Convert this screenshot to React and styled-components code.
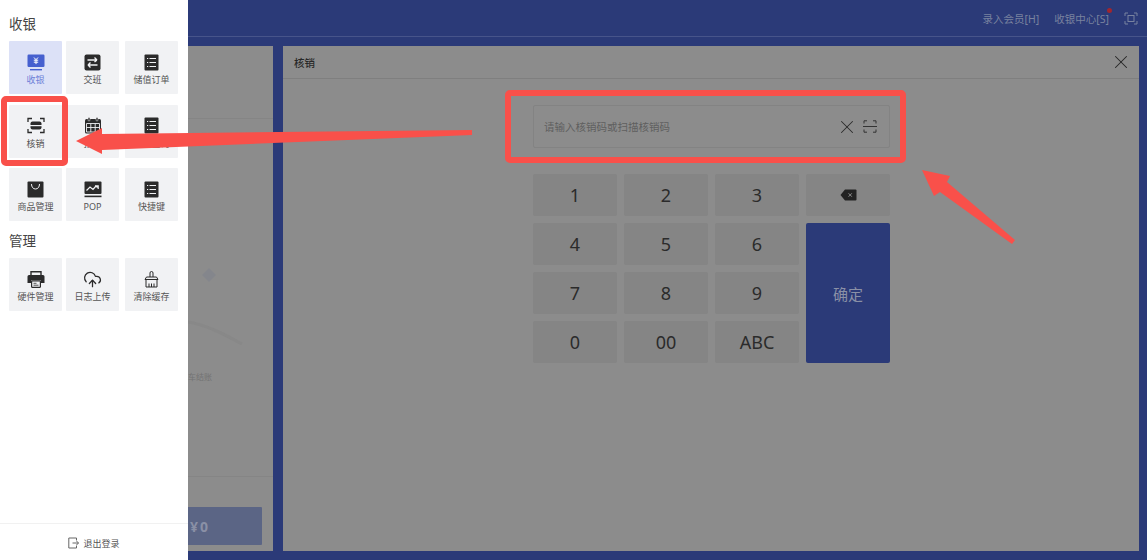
import React from 'react';
import styled, { createGlobalStyle } from 'styled-components';
import { X, CloudUpload } from 'lucide-react';

const GlobalStyle = createGlobalStyle`
  html, body {
    margin: 0;
    padding: 0;
    height: 100%;
    overflow: hidden;
    font-family: "Noto Sans", "Noto Sans CJK SC", sans-serif;
  }
  #root {
    height: 100%;
  }
  * {
    box-sizing: border-box;
  }
`;

const ListIcon = () => (
  <svg width="17" height="17" viewBox="0 0 17 17">
    <rect x="1.5" y="0.5" width="14" height="16" rx="1" fill="#2b2b2b" />
    <path d="M4 4.5h1.2M6.5 4.5h6.5M4 8.5h1.2M6.5 8.5h6.5M4 12.5h1.2M6.5 12.5h6.5" stroke="#f1f2f4" strokeWidth="1.2" />
  </svg>
);

const CashIcon = () => (
  <svg width="18" height="17" viewBox="0 0 18 17">
    <rect x="0.5" y="0.5" width="17" height="12.5" rx="1.2" fill="#4660cf" />
    <rect x="3" y="15" width="12" height="1.4" fill="#4660cf" />
    <path d="M7 3.5l2 2.2 2-2.2M6.8 6.2h4.4M6.8 8.2h4.4M9 5.7v4.4" stroke="#fff" strokeWidth="1" fill="none" />
  </svg>
);

const SwapIcon = () => (
  <svg width="17" height="17" viewBox="0 0 17 17">
    <rect x="0.5" y="0.5" width="16" height="16" rx="2" fill="#2b2b2b" />
    <path d="M3.5 6h9.5M10.5 3.5L13 6M13.5 11H4M6.5 8.5L4 11M4 11l2.5 2.5M13 6l-2.5 2" stroke="#f1f2f4" strokeWidth="1.4" fill="none" />
  </svg>
);

const VerifyIcon = () => (
  <svg width="18" height="17" viewBox="0 0 18 17">
    <path d="M1 5V1.5h4M13 1.5h4V5M1 12v3.5h4M13 15.5h4V12" stroke="#2b2b2b" strokeWidth="1.3" fill="none" />
    <rect x="3.5" y="4.5" width="11" height="8" rx="2" fill="#2b2b2b" />
    <rect x="1" y="8" width="16" height="1.2" fill="#f1f2f4" />
  </svg>
);

const CalendarIcon = () => (
  <svg width="18" height="17" viewBox="0 0 18 17">
    <rect x="1" y="2" width="16" height="14.5" rx="1.5" fill="#2b2b2b" />
    <rect x="4" y="0.5" width="2" height="3.5" rx="1" fill="#2b2b2b" stroke="#f1f2f4" strokeWidth="0.5" />
    <rect x="12" y="0.5" width="2" height="3.5" rx="1" fill="#2b2b2b" stroke="#f1f2f4" strokeWidth="0.5" />
    <path d="M2.5 6.5h13v8.5h-13zM2.5 10.5h13M6.8 6.5v8.5M11.2 6.5v8.5" stroke="#f1f2f4" strokeWidth="0.9" fill="none" />
  </svg>
);

const BagIcon = () => (
  <svg width="17" height="17" viewBox="0 0 17 17">
    <rect x="0.5" y="0.5" width="16" height="16" rx="1" fill="#2b2b2b" />
    <path d="M4.5 3c0 3 1.6 5 4 5s4-2 4-5" stroke="#f1f2f4" strokeWidth="1" fill="none" />
  </svg>
);

const ChartIcon = () => (
  <svg width="18" height="17" viewBox="0 0 18 17">
    <rect x="0.5" y="0.5" width="17" height="12.5" rx="1" fill="#2b2b2b" />
    <rect x="0.5" y="14.6" width="17" height="1.6" fill="#2b2b2b" />
    <path d="M2.5 9.5l3.5-3.5 3 2.5 3-3.5 1.5 1.5M11 4.8h3.2V8" stroke="#f1f2f4" strokeWidth="1.2" fill="none" />
  </svg>
);

const PrinterIcon = () => (
  <svg width="18" height="17" viewBox="0 0 18 17">
    <path d="M4 4V0.8h10V4" stroke="#2b2b2b" strokeWidth="1.4" fill="none" />
    <path d="M2 4h14a1.5 1.5 0 011.5 1.5V12H14V9.5H4V12H.5V5.5A1.5 1.5 0 012 4z" fill="#2b2b2b" />
    <rect x="4.6" y="10" width="8.8" height="6.3" rx="0.5" fill="#f1f2f4" stroke="#2b2b2b" strokeWidth="1.2" />
    <path d="M6.5 12.3h3M6.5 14.2h5" stroke="#2b2b2b" strokeWidth="0.8" />
  </svg>
);

const BrushIcon = () => (
  <svg width="17" height="17" viewBox="0 0 17 17">
    <path d="M7 6V2a1.5 1.5 0 013 0v4M3.5 6h10l1.5 2.5H2zM3 8.5v7.5h11V8.5M6 12.5V16M8.5 12.5V16M11 12.5V16" stroke="#2b2b2b" strokeWidth="1" fill="none" />
  </svg>
);

const FrameIcon = () => (
  <svg width="14" height="13" viewBox="0 0 14 13">
    <path d="M1 4V1h3M10 1h3v3M1 9v3h3M10 12h3V9" stroke="#79829f" strokeWidth="1" fill="none" />
    <rect x="4" y="3.5" width="6" height="6" stroke="#79829f" strokeWidth="1" fill="none" />
  </svg>
);

const ScanIcon = () => (
  <svg width="14" height="13" viewBox="0 0 14 13">
    <path d="M1 3.5V.8h3M10 .8h3v2.7M1 9.5v2.7h3M10 12.2h3V9.5M0 6.5h14" stroke="#333" strokeWidth="1" fill="none" />
  </svg>
);

const BackspaceIcon = () => (
  <svg width="17" height="12" viewBox="0 0 17 12">
    <path d="M5 0.5h10.5a1 1 0 011 1v9a1 1 0 01-1 1H5L0.5 6z" fill="#222" />
    <path d="M8.6 4.3l3.2 3.4M11.8 4.3l-3.2 3.4" stroke="#8a8a8a" strokeWidth="1" />
  </svg>
);

const ExitIcon = () => (
  <svg width="11" height="12" viewBox="0 0 11 12">
    <path d="M8.5 3.5V1H.8v10h7.7V8.5" stroke="#666" strokeWidth="1" fill="none" />
    <path d="M4.5 6h6M8.5 4l2 2-2 2" stroke="#666" strokeWidth="1" fill="none" />
  </svg>
);

const cashTiles = [
  { label: '收银', icon: <CashIcon />, active: true },
  { label: '交班', icon: <SwapIcon /> },
  { label: '储值订单', icon: <ListIcon /> },
  { label: '核销', icon: <VerifyIcon /> },
  { label: '预约', icon: <CalendarIcon /> },
  { label: '订单查询', icon: <ListIcon /> },
  { label: '商品管理', icon: <BagIcon /> },
  { label: 'POP', icon: <ChartIcon /> },
  { label: '快捷键', icon: <ListIcon /> },
];

const manageTiles = [
  { label: '硬件管理', icon: <PrinterIcon /> },
  { label: '日志上传', icon: <CloudUpload size={19} color="#2b2b2b" strokeWidth={1.6} /> },
  { label: '清除缓存', icon: <BrushIcon /> },
];

const keys = ['1', '2', '3', 'del', '4', '5', '6', 'ok', '7', '8', '9', '0', '00', 'ABC'];

function Tiles({ items }) {
  return (
    <TileGrid>
      {items.map(item => (
        <Tile key={item.label} $active={item.active}>
          <TileIcon>{item.icon}</TileIcon>
          <TileLabel $active={item.active}>{item.label}</TileLabel>
        </Tile>
      ))}
    </TileGrid>
  );
}

export default function App() {
  return (
    <Page>
      <GlobalStyle />
      <Drawer>
        <DrawerBody>
          <SectionTitle>收银</SectionTitle>
          <Tiles items={cashTiles} />
          <SectionTitle>管理</SectionTitle>
          <Tiles items={manageTiles} />
        </DrawerBody>
        <Logout>
          <ExitIcon />
          退出登录
        </Logout>
      </Drawer>

      <Main>
        <TopBar>
          <TopLink>录入会员[H]</TopLink>
          <TopLink $dot>收银中心[S]</TopLink>
          <FrameIcon />
        </TopBar>
        <Content>
          <CartPanel>
            <CartHead />
            <CartBody>
              <Ghost viewBox="0 0 85 110" width="85" height="110">
                <path d="M14 19l7-7 7 7-7 7z" fill="#84868c" />
                <path d="M0 66c18 3 34 11 54 22" stroke="#888888" strokeWidth="3" fill="none" />
              </Ghost>
              <CartHint>车结账</CartHint>
            </CartBody>
            <CartFoot>
              <PayButton>¥0</PayButton>
            </CartFoot>
          </CartPanel>

          <Dialog>
            <DialogHead>
              <DialogTitle>核销</DialogTitle>
              <X size={22} color="#262626" strokeWidth={1.1} />
            </DialogHead>
            <DialogBody>
              <CodeInput>
                <Placeholder>请输入核销码或扫描核销码</Placeholder>
                <X size={22} color="#2b2b2b" strokeWidth={1.1} />
                <ScanIcon />
              </CodeInput>
              <Keypad>
                {keys.map(key => {
                  if (key === 'ok') return <ConfirmKey key={key}>确定</ConfirmKey>;
                  return <Key key={key}>{key === 'del' ? <BackspaceIcon /> : key}</Key>;
                })}
              </Keypad>
            </DialogBody>
          </Dialog>
        </Content>
      </Main>

      {/* annotations drawn on top of the screenshot */}
      <MarkBox $x={1} $y={96} $w={67} $h={70} />
      <MarkBox $x={505} $y={90} $w={401} $h={73} />
      <Arrows viewBox="0 0 1147 560" width="1147" height="560">
        <polygon points="472,130 472,135 102,150 102,154 76,141 102,128 102,134" fill="#f9504a" />
        <polygon points="922,170 950,176 947,182 1015,240 1012,244 940,192 934,196" fill="#f9504a" />
      </Arrows>
    </Page>
  );
}

const Page = styled.div`
  position: relative;
  display: flex;
  width: 1147px;
  height: 560px;
  overflow: hidden;
`;

const Drawer = styled.aside`
  display: flex;
  flex-direction: column;
  flex: 0 0 188px;
  background: #fff;
`;

const DrawerBody = styled.div`
  flex: 1;
  padding: 15px 9px 0 9px;
`;

const SectionTitle = styled.h3`
  margin: 0 0 7px 0;
  height: 19px;
  font-size: 13.5px;
  font-weight: 400;
  line-height: 19px;
  color: #444;
`;

const TileGrid = styled.div`
  display: grid;
  grid-template-columns: 57px 59px 53px;
  grid-auto-rows: 53px;
  row-gap: 10.5px;
  margin-bottom: 11px;
`;

const Tile = styled.div`
  display: flex;
  flex-direction: column;
  align-items: center;
  width: 53px;
  padding-top: 12px;
  background: ${props => (props.$active ? '#dce1f7' : '#f1f2f4')};
  border-radius: 1px;
`;

const TileIcon = styled.div`
  display: flex;
  align-items: center;
  justify-content: center;
  height: 18px;
`;

const TileLabel = styled.span`
  margin-top: 2px;
  font-size: 9px;
  line-height: 14px;
  white-space: nowrap;
  color: ${props => (props.$active ? '#6d80d8' : '#555')};
`;

const Logout = styled.div`
  display: flex;
  align-items: center;
  justify-content: center;
  gap: 4px;
  height: 37px;
  padding-top: 2px;
  border-top: 1px solid #f1f1f1;
  font-size: 9px;
  color: #555;
`;

const Main = styled.main`
  display: flex;
  flex-direction: column;
  flex: 1;
  min-width: 0;
  background: #2b3a78;
`;

const TopBar = styled.header`
  display: flex;
  align-items: center;
  justify-content: flex-end;
  gap: 15px;
  height: 37px;
  padding-right: 9px;
  border-bottom: 1px solid #47548a;
`;

const TopLink = styled.span`
  position: relative;
  font-size: 10.5px;
  color: #79829f;

  ${props =>
    props.$dot &&
    `&::after {
      content: '';
      position: absolute;
      top: -3px;
      right: -3px;
      width: 5px;
      height: 5px;
      border-radius: 50%;
      background: #a0262f;
    }`}
`;

const Content = styled.div`
  display: flex;
  flex: 1;
  gap: 10px;
  padding: 9px 8px 9px 0;
`;

const CartPanel = styled.section`
  display: flex;
  flex-direction: column;
  flex: 0 0 85px;
  background: #8c8c8c;
`;

const CartHead = styled.div`
  height: 73px;
  border-bottom: 1px solid #858585;
`;

const CartBody = styled.div`
  position: relative;
  flex: 1;
`;

const Ghost = styled.svg`
  position: absolute;
  top: 137px;
  left: 0;
`;

const CartHint = styled.span`
  position: absolute;
  top: 252px;
  left: 0;
  font-size: 8px;
  color: #737373;
`;

const CartFoot = styled.div`
  display: flex;
  align-items: flex-start;
  height: 75px;
  padding-top: 30px;
  border-top: 1px solid #858585;
`;

const PayButton = styled.div`
  display: flex;
  align-items: center;
  width: 74px;
  height: 38px;
  padding-left: 2px;
  background: #5b6585;
  border-radius: 0 1px 1px 0;
  font-size: 14px;
  font-weight: 700;
  letter-spacing: 2px;
  color: #8a90a6;
`;

const Dialog = styled.section`
  display: flex;
  flex-direction: column;
  flex: 1;
  background: #8c8c8c;
`;

const DialogHead = styled.div`
  display: flex;
  align-items: center;
  justify-content: space-between;
  height: 33px;
  padding: 0 7px 0 11px;
  border-bottom: 1px solid #7f7f7f;
`;

const DialogTitle = styled.h2`
  margin: 0;
  font-size: 10.5px;
  font-weight: 500;
  color: #282828;
`;

const DialogBody = styled.div`
  display: flex;
  flex-direction: column;
  width: 357px;
  margin-top: 26px;
  margin-left: 250px;
`;

const CodeInput = styled.div`
  display: flex;
  align-items: center;
  gap: 5px;
  height: 43px;
  padding: 0 12px 0 10px;
  border: 1px solid #838383;
  border-radius: 2px;
`;

const Placeholder = styled.span`
  flex: 1;
  font-size: 10.5px;
  color: #5f5f5f;
`;

const Keypad = styled.div`
  display: grid;
  grid-template-columns: 84px 84px 84px 84px;
  grid-auto-rows: 42px;
  gap: 7px;
  justify-content: space-between;
  margin-top: 26px;
`;

const Key = styled.div`
  display: flex;
  align-items: center;
  justify-content: center;
  background: #858585;
  border-radius: 2px;
  font-size: 18px;
  color: #2b2b2b;
`;

const ConfirmKey = styled.div`
  display: flex;
  align-items: center;
  justify-content: center;
  grid-column: 4;
  grid-row: 2 / span 3;
  background: #2b3a78;
  border-radius: 2px;
  font-size: 15px;
  color: #8a90a6;
`;

const MarkBox = styled.div`
  position: absolute;
  left: ${props => props.$x}px;
  top: ${props => props.$y}px;
  width: ${props => props.$w}px;
  height: ${props => props.$h}px;
  border: 6px solid #f9504a;
  border-radius: 5px;
`;

const Arrows = styled.svg`
  position: absolute;
  top: 0;
  left: 0;
  pointer-events: none;
`;
